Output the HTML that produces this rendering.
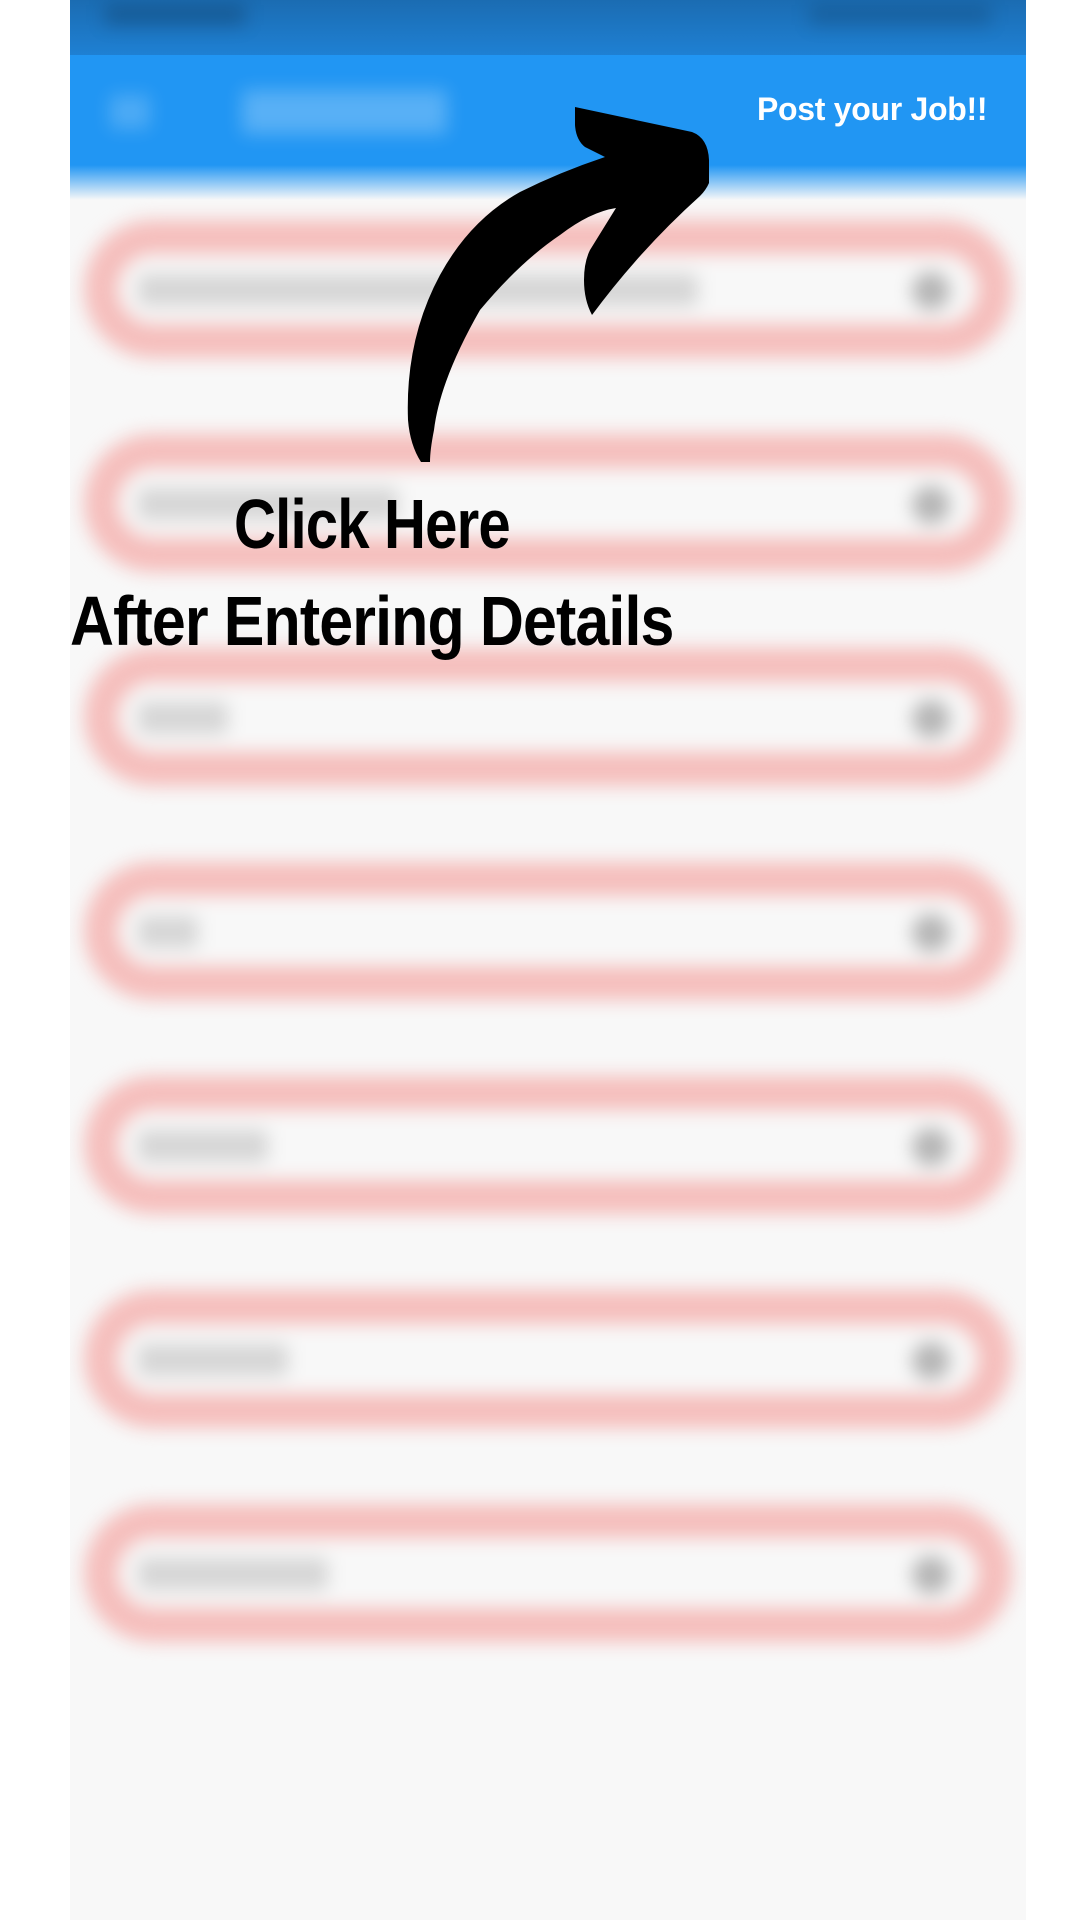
<!DOCTYPE html>
<html><head><meta charset="utf-8">
<style>
html,body{margin:0;padding:0;width:1080px;height:1920px;background:#fff;overflow:hidden;font-family:"Liberation Sans",sans-serif;}
#phone{position:absolute;left:70px;top:0;width:956px;height:1920px;background:#f8f8f8;overflow:hidden;}
#status{position:absolute;left:0;top:0;width:956px;height:60px;background:linear-gradient(#1b6cb2,#1f82d6);}
#bar{position:absolute;left:0;top:55px;width:956px;height:110px;background:#2196f3;}
#fade{position:absolute;left:0;top:165px;width:956px;height:35px;background:linear-gradient(#2196f3,#f8f8f8);}
.blur{filter:blur(9px);}
.pill{position:absolute;left:14px;width:860px;height:70px;border:34px solid #f5bebc;border-radius:70px;background:#f8f8f8;filter:blur(9px);}
.ph{position:absolute;left:20px;top:20px;height:32px;background:#d6d6d6;border-radius:6px;}
.ic{position:absolute;right:28px;top:18px;width:38px;height:38px;background:#b5b5b5;border-radius:50%;}
#post{position:absolute;left:757px;top:91px;color:#fff;font-size:32px;font-weight:bold;letter-spacing:-0.3px;}
.hand{position:absolute;font-weight:bold;color:#000;font-size:70px;transform-origin:left top;white-space:nowrap;letter-spacing:-1px;}
</style></head><body>
<div id="phone">
<div id="status"></div>
<div id="bar"></div>
<div id="fade"></div>
<div class="blur" style="position:absolute;left:40px;top:95px;width:40px;height:34px;background:rgba(255,255,255,.2);"></div>
<div class="blur" style="position:absolute;left:172px;top:90px;width:205px;height:44px;background:rgba(255,255,255,.25);"></div>
<div class="blur" style="position:absolute;left:35px;top:5px;width:140px;height:20px;background:rgba(0,0,0,.2);"></div>
<div class="blur" style="position:absolute;left:740px;top:5px;width:180px;height:20px;background:rgba(0,0,0,.15);"></div>

<div class="pill" style="top:220px"><div class="ph" style="width:560px"></div><div class="ic"></div></div>
<div class="pill" style="top:434px"><div class="ph" style="width:260px"></div><div class="ic"></div></div>
<div class="pill" style="top:648px"><div class="ph" style="width:90px"></div><div class="ic"></div></div>
<div class="pill" style="top:862px"><div class="ph" style="width:60px"></div><div class="ic"></div></div>
<div class="pill" style="top:1076px"><div class="ph" style="width:130px"></div><div class="ic"></div></div>
<div class="pill" style="top:1290px"><div class="ph" style="width:150px"></div><div class="ic"></div></div>
<div class="pill" style="top:1504px"><div class="ph" style="width:190px"></div><div class="ic"></div></div>
</div>
<div id="post">Post your Job!!</div>
<svg style="position:absolute;left:0;top:0" width="1080" height="1920">
<path d="M575 107 L692 132 Q708 138 709 160 L709 183 Q706 190 700 196 Q640 250 592 315 Q584 300 584 280 Q584 262 590 250 L616 208 Q590 212 560 235 Q520 262 480 310 Q440 380 434 430 Q430 450 430 462 L421 462 Q410 445 408 420 Q405 340 440 275 Q470 220 520 192 Q560 172 605 157 L585 147 Q576 140 575 125 Z" fill="#000"/>
</svg>
<div class="hand" style="left:234px;top:484px;transform:scaleX(0.83)">Click Here</div>
<div class="hand" style="left:70px;top:581px;transform:scaleX(0.87)">After Entering Details</div>
</body></html>
